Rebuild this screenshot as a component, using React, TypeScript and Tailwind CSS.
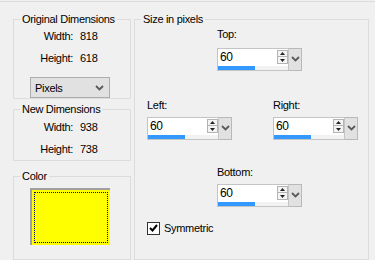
import React from "react";

function Chevron() {
  return (
    <svg width="9" height="6" viewBox="0 0 9 6" className="block">
      <path d="M1 1 L4.5 4.5 L8 1" fill="none" stroke="#5a5a5a" strokeWidth="1.8" />
    </svg>
  );
}

function Spin({ value }: { value: string }) {
  return (
    <div className="flex h-[23px] w-[85px]">
      <div className="flex w-[72px] flex-col border border-[#c4c4c4] bg-white">
        <div className="flex h-[17px]">
          <div className="flex-1 pl-[2px] pt-[1px] text-[12px] leading-[15px] text-black">{value}</div>
          <div className="flex w-[11px] flex-col pt-[1px]">
            <div className="flex h-[7px] items-center justify-center border border-[#b4b4b4] bg-[#f4f4f4]">
              <svg width="5" height="3" viewBox="0 0 5 3"><path d="M0 3 L2.5 0 L5 3Z" fill="#222" /></svg>
            </div>
            <div className="flex h-[7px] items-center justify-center border border-t-0 border-[#b4b4b4] bg-[#f4f4f4]">
              <svg width="5" height="3" viewBox="0 0 5 3"><path d="M0 0 L2.5 3 L5 0Z" fill="#222" /></svg>
            </div>
          </div>
        </div>
        <div className="flex h-[4px] bg-[#f2f2f2]">
          <div className="h-full w-[37px] bg-[#3399ff]" />
        </div>
      </div>
      <div className="flex w-[13px] justify-center border border-l-0 border-[#b9b9b9] bg-[#e1e1e1] pt-[7px]">
        <Chevron />
      </div>
    </div>
  );
}

function Row({ label, value }: { label: string; value: string }) {
  return (
    <div className="flex h-[22px] items-center">
      <span className="w-[59px] text-right">{label}</span>
      <span className="ml-[7px]">{value}</span>
    </div>
  );
}

export default function App() {
  return (
    <div
      className="h-[260px] w-[375px] overflow-hidden bg-[#f0f0f0] pt-px text-[11px] leading-[14px] tracking-[-0.3px] text-black"
      style={{ fontFamily: '"Liberation Sans", Arial, sans-serif' }}
    >
      <div className="flex h-[259px] border-t border-[#dcdcdc]">
        <div className="flex w-[131px] flex-col pl-[13px] pt-[10px]">
          <fieldset className="h-[92px] border border-[#dcdcdc]">
            <legend className="ml-[6px] whitespace-nowrap px-[2px]">Original Dimensions</legend>
            <div className="-mt-px">
              <Row label="Width:" value="818" />
              <Row label="Height:" value="618" />
            </div>
            <div className="ml-[16px] mt-[8px] flex h-[21px] w-[80px] items-center justify-between border border-[#adadad] bg-[#e1e1e1] pl-[4px] pr-[5px]">
              <span>Pixels</span>
              <Chevron />
            </div>
          </fieldset>
          <fieldset className="mt-[3px] h-[61px] border border-[#dcdcdc]">
            <legend className="ml-[6px] whitespace-nowrap px-[2px]">New Dimensions</legend>
            <div>
              <Row label="Width:" value="938" />
              <Row label="Height:" value="738" />
            </div>
          </fieldset>
          <fieldset className="mt-[8px] h-[100px] border border-[#dcdcdc]">
            <legend className="ml-[6px] px-[2px]">Color</legend>
            <div className="ml-[16px] mt-[5px] h-[57px] w-[80px] border-l-2 border-t-2 border-[#a0a0a0] bg-[#ffff00] p-[2px]">
              <div className="h-full w-full border border-dotted border-[#000080]" />
            </div>
          </fieldset>
        </div>
        <div className="flex flex-1 flex-col pl-[3px] pr-[6px] pt-[10px]">
          <fieldset className="h-[270px] border border-[#dcdcdc]">
            <legend className="ml-[6px] whitespace-nowrap px-[2px]">Size in pixels</legend>
            <div className="ml-[82px] mt-[1px] w-[85px]">
              <div>Top:</div>
              <div className="mt-[7px]">
                <Spin value="60" />
              </div>
            </div>
            <div className="ml-[12px] mt-[27px] flex">
              <div>
                <div>Left:</div>
                <div className="mt-[5px]">
                  <Spin value="60" />
                </div>
              </div>
              <div className="ml-[41px]">
                <div>Right:</div>
                <div className="mt-[5px]">
                  <Spin value="60" />
                </div>
              </div>
            </div>
            <div className="ml-[82px] mt-[25px] w-[85px]">
              <div>Bottom:</div>
              <div className="mt-[5px]">
                <Spin value="60" />
              </div>
            </div>
            <div className="ml-[12px] mt-[14px] flex items-center">
              <div className="flex h-[13px] w-[13px] items-center justify-center border border-[#333] bg-white">
                <svg width="9" height="8" viewBox="0 0 9 8"><path d="M1 4 L3.5 6.5 L8 1" fill="none" stroke="#000" strokeWidth="2" /></svg>
              </div>
              <span className="ml-[4px]">Symmetric</span>
            </div>
          </fieldset>
        </div>
      </div>
    </div>
  );
}
